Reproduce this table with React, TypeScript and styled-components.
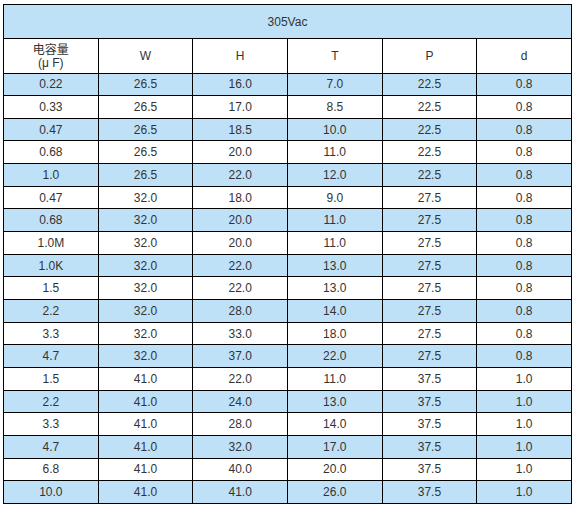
import React from 'react'
import styled, { createGlobalStyle } from 'styled-components'

const GlobalStyle = createGlobalStyle`
	html,
	body {
		margin: 0;
		padding: 0;
		background: #ffffff;
	}
`

type Row = [string, string, string, string, string, string]

const rows: Row[] = [
	['0.22', '26.5', '16.0', '7.0', '22.5', '0.8'],
	['0.33', '26.5', '17.0', '8.5', '22.5', '0.8'],
	['0.47', '26.5', '18.5', '10.0', '22.5', '0.8'],
	['0.68', '26.5', '20.0', '11.0', '22.5', '0.8'],
	['1.0', '26.5', '22.0', '12.0', '22.5', '0.8'],
	['0.47', '32.0', '18.0', '9.0', '27.5', '0.8'],
	['0.68', '32.0', '20.0', '11.0', '27.5', '0.8'],
	['1.0M', '32.0', '20.0', '11.0', '27.5', '0.8'],
	['1.0K', '32.0', '22.0', '13.0', '27.5', '0.8'],
	['1.5', '32.0', '22.0', '13.0', '27.5', '0.8'],
	['2.2', '32.0', '28.0', '14.0', '27.5', '0.8'],
	['3.3', '32.0', '33.0', '18.0', '27.5', '0.8'],
	['4.7', '32.0', '37.0', '22.0', '27.5', '0.8'],
	['1.5', '41.0', '22.0', '11.0', '37.5', '1.0'],
	['2.2', '41.0', '24.0', '13.0', '37.5', '1.0'],
	['3.3', '41.0', '28.0', '14.0', '37.5', '1.0'],
	['4.7', '41.0', '32.0', '17.0', '37.5', '1.0'],
	['6.8', '41.0', '40.0', '20.0', '37.5', '1.0'],
	['10.0', '41.0', '41.0', '26.0', '37.5', '1.0'],
]

const App: React.FC = () => {
	return (
		<Page>
			<GlobalStyle />
			<SpecTable>
				<colgroup>
					{Array.from({ length: 6 }).map((_, i) => (
						<col key={i} />
					))}
				</colgroup>
				<thead>
					<TitleRow>
						<TitleCell colSpan={6}>305Vac</TitleCell>
					</TitleRow>
					<HeadRow>
						<HeadCell>
							电容量
							<br />
							(μ F)
						</HeadCell>
						<HeadCell>W</HeadCell>
						<HeadCell>H</HeadCell>
						<HeadCell>T</HeadCell>
						<HeadCell>P</HeadCell>
						<HeadCell>d</HeadCell>
					</HeadRow>
				</thead>
				<tbody>
					{rows.map((row, i) => (
						<DataRow key={i} $shaded={i % 2 === 0}>
							{row.map((value, j) => (
								<Cell key={j}>{value}</Cell>
							))}
						</DataRow>
					))}
				</tbody>
			</SpecTable>
		</Page>
	)
}

const Cell = styled.td`
	border: 1px solid #000000;
	padding: 0;
	text-align: center;
	vertical-align: middle;
	color: #333333;
	font-family: 'Liberation Sans', Arial, sans-serif;
	font-size: 12px;
	line-height: 14px;
`

const HeadCell = styled(Cell).attrs({ as: 'th' })`
	font-weight: 400;
	font-family: 'Liberation Sans', 'Noto Sans CJK SC', sans-serif;
	line-height: 13px;
	padding-top: 2px;
`

const TitleCell = styled(Cell).attrs({ as: 'th' })`
	font-weight: 400;
`

const DataRow = styled.tr<{ $shaded: boolean }>`
	height: 22.67px;
	background: ${({ $shaded }) => ($shaded ? '#bfe1f8' : '#ffffff')};
`

const HeadRow = styled.tr`
	height: 34.5px;
	background: #ffffff;
`

const TitleRow = styled.tr`
	height: 34px;
	background: #bfe1f8;
`

const SpecTable = styled.table`
	width: 569px;
	table-layout: fixed;
	border-collapse: collapse;

	col {
		width: 16.666%;
	}
`

const Page = styled.div`
	padding: 4px 0 0 3px;
`

export default App
